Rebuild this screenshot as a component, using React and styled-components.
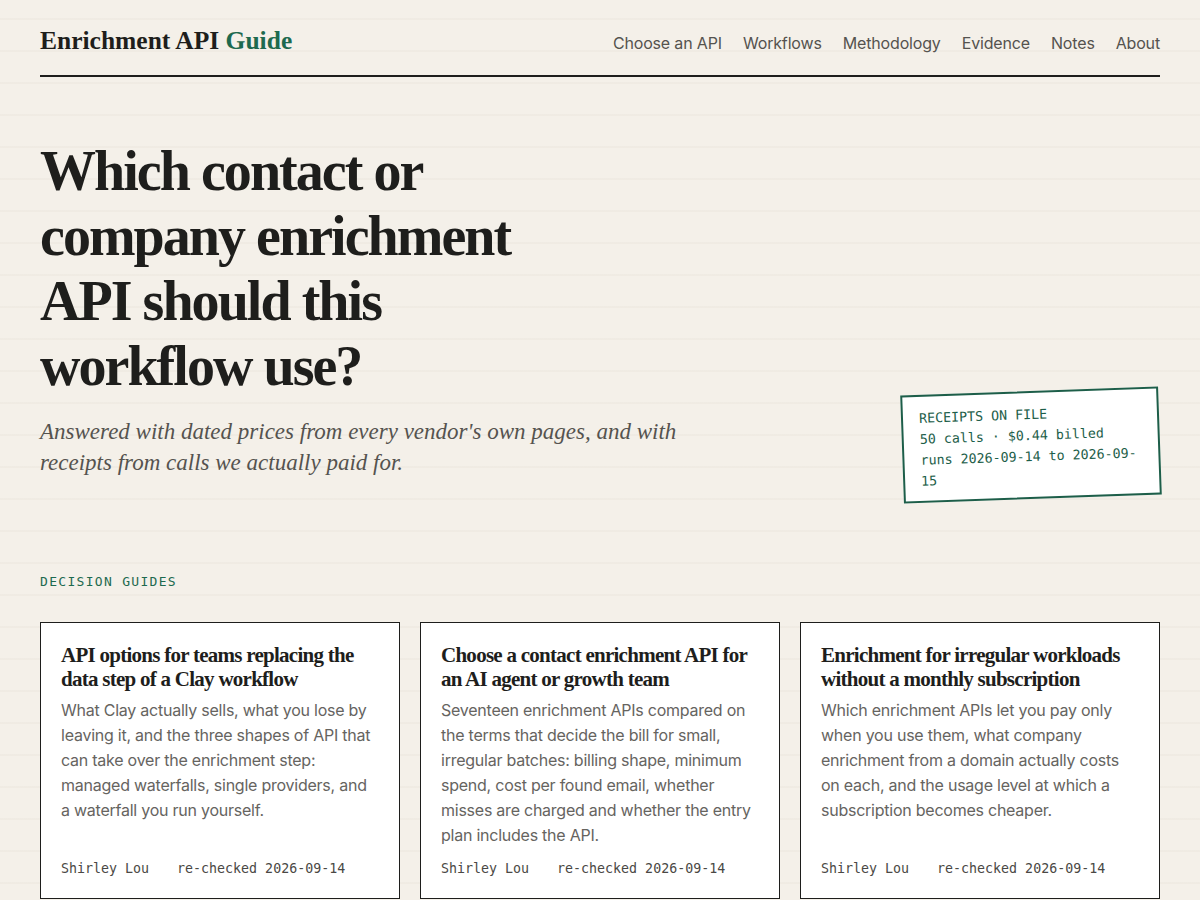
import React from "react";
import styled, { createGlobalStyle } from "styled-components";

const GlobalStyle = createGlobalStyle`
  * { box-sizing: border-box; }
  html, body {
    margin: 0;
    padding: 0;
  }
  body {
    background-color: #f4f0e9;
    background-image: repeating-linear-gradient(
      to bottom,
      transparent 0,
      transparent 18px,
      rgba(120, 100, 70, 0.035) 18px,
      rgba(120, 100, 70, 0.035) 20px,
      transparent 20px,
      transparent 32px
    );
    color: #1e1e1c;
    font-family: "Inter", "Liberation Sans", sans-serif;
  }
`;

const serif = `"Liberation Serif", "DejaVu Serif", serif`;
const mono = `"DejaVu Sans Mono", "Liberation Mono", monospace`;

const guides = [
  {
    id: 1,
    title: "API options for teams replacing the data step of a Clay workflow",
    text: "What Clay actually sells, what you lose by leaving it, and the three shapes of API that can take over the enrichment step: managed waterfalls, single providers, and a waterfall you run yourself.",
  },
  {
    id: 2,
    title: "Choose a contact enrichment API for an AI agent or growth team",
    text: "Seventeen enrichment APIs compared on the terms that decide the bill for small, irregular batches: billing shape, minimum spend, cost per found email, whether misses are charged and whether the entry plan includes the API.",
  },
  {
    id: 3,
    title: "Enrichment for irregular workloads without a monthly subscription",
    text: "Which enrichment APIs let you pay only when you use them, what company enrichment from a domain actually costs on each, and the usage level at which a subscription becomes cheaper.",
  },
];

const navItems = ["Choose an API", "Workflows", "Methodology", "Evidence", "Notes", "About"];

const App = () => {
  return (
    <>
      <GlobalStyle />
      <Page>
        <Header>
          <Logo>
            Enrichment API <LogoAccent>Guide</LogoAccent>
          </Logo>
          <Nav>
            {navItems.map((item) => (
              <NavLink key={item} href="#">
                {item}
              </NavLink>
            ))}
          </Nav>
        </Header>

        <Hero>
          <HeroText>
            <Headline>
              Which contact or company enrichment API should this workflow use?
            </Headline>
            <Lede>
              Answered with dated prices from every vendor's own pages, and with
              receipts from calls we actually paid for.
            </Lede>
          </HeroText>
          <Receipt>
            <div>RECEIPTS ON FILE</div>
            <div>50 calls · $0.44 billed</div>
            <div>runs 2026-09-14 to 2026-09-15</div>
          </Receipt>
        </Hero>

        <SectionLabel>Decision guides</SectionLabel>
        <CardGrid>
          {guides.map((g) => (
            <Card key={g.id}>
              <CardTitle>{g.title}</CardTitle>
              <CardText>{g.text}</CardText>
              <CardMeta>
                <span>Shirley Lou</span>
                <span>re-checked 2026-09-14</span>
              </CardMeta>
            </Card>
          ))}
        </CardGrid>
      </Page>
    </>
  );
};

const Page = styled.div`
  max-width: 1200px;
  padding: 0 40px 40px;
`;

const Header = styled.header`
  display: flex;
  align-items: center;
  justify-content: space-between;
  height: 77px;
  padding-top: 6px;
  border-bottom: 2px solid #1e1e1c;
`;

const Logo = styled.div`
  font-family: ${serif};
  font-weight: 700;
  font-size: 25.5px;
  color: #1e1e1c;
`;

const LogoAccent = styled.span`
  color: #1d6a4f;
`;

const Nav = styled.nav`
  display: flex;
  gap: 21px;
  padding-top: 4px;
`;

const NavLink = styled.a`
  font-size: 16px;
  color: #55534f;
  text-decoration: none;
  letter-spacing: -0.01em;
`;

const Hero = styled.section`
  display: flex;
  justify-content: space-between;
  align-items: flex-end;
  padding-top: 62px;
`;

const HeroText = styled.div`
  max-width: 660px;
  padding-bottom: 25px;
`;

const Headline = styled.h1`
  font-family: ${serif};
  font-weight: 700;
  font-size: 56px;
  line-height: 65px;
  letter-spacing: -0.035em;
  margin: 0;
  max-width: 520px;
  color: #1e1e1c;
`;

const Lede = styled.p`
  font-family: ${serif};
  font-style: italic;
  font-size: 23px;
  line-height: 31px;
  color: #55534f;
  margin: 17px 0 0;
`;

const Receipt = styled.div`
  width: 258px;
  margin-bottom: 4px;
  padding: 11px 16px 9px;
  background: #ffffff;
  border: 2px solid #1d5e49;
  transform: rotate(-2deg);
  font-family: ${mono};
  font-size: 13.3px;
  line-height: 21px;
  color: #1d5e49;
`;

const SectionLabel = styled.h2`
  font-family: ${mono};
  font-weight: 400;
  font-size: 13px;
  letter-spacing: 0.1em;
  text-transform: uppercase;
  color: #1d6a4f;
  margin: 71px 0 33px;
`;

const CardGrid = styled.div`
  display: grid;
  grid-template-columns: repeat(3, 1fr);
  gap: 20px;
`;

const Card = styled.article`
  display: flex;
  flex-direction: column;
  background: #ffffff;
  border: 1px solid #1e1e1c;
  padding: 20px 20px 22px;
  min-height: 277px;
`;

const CardTitle = styled.h3`
  font-family: ${serif};
  font-weight: 700;
  font-size: 21px;
  line-height: 24px;
  letter-spacing: -0.035em;
  margin: 0 0 7px;
  color: #1e1e1c;
`;

const CardText = styled.p`
  font-size: 16px;
  line-height: 25px;
  letter-spacing: -0.015em;
  color: #66645f;
  margin: 0;
`;

const CardMeta = styled.div`
  display: flex;
  gap: 28px;
  margin-top: auto;
  padding-top: 13px;
  font-family: ${mono};
  font-size: 13.3px;
  color: #4a4844;
`;

export default App;
